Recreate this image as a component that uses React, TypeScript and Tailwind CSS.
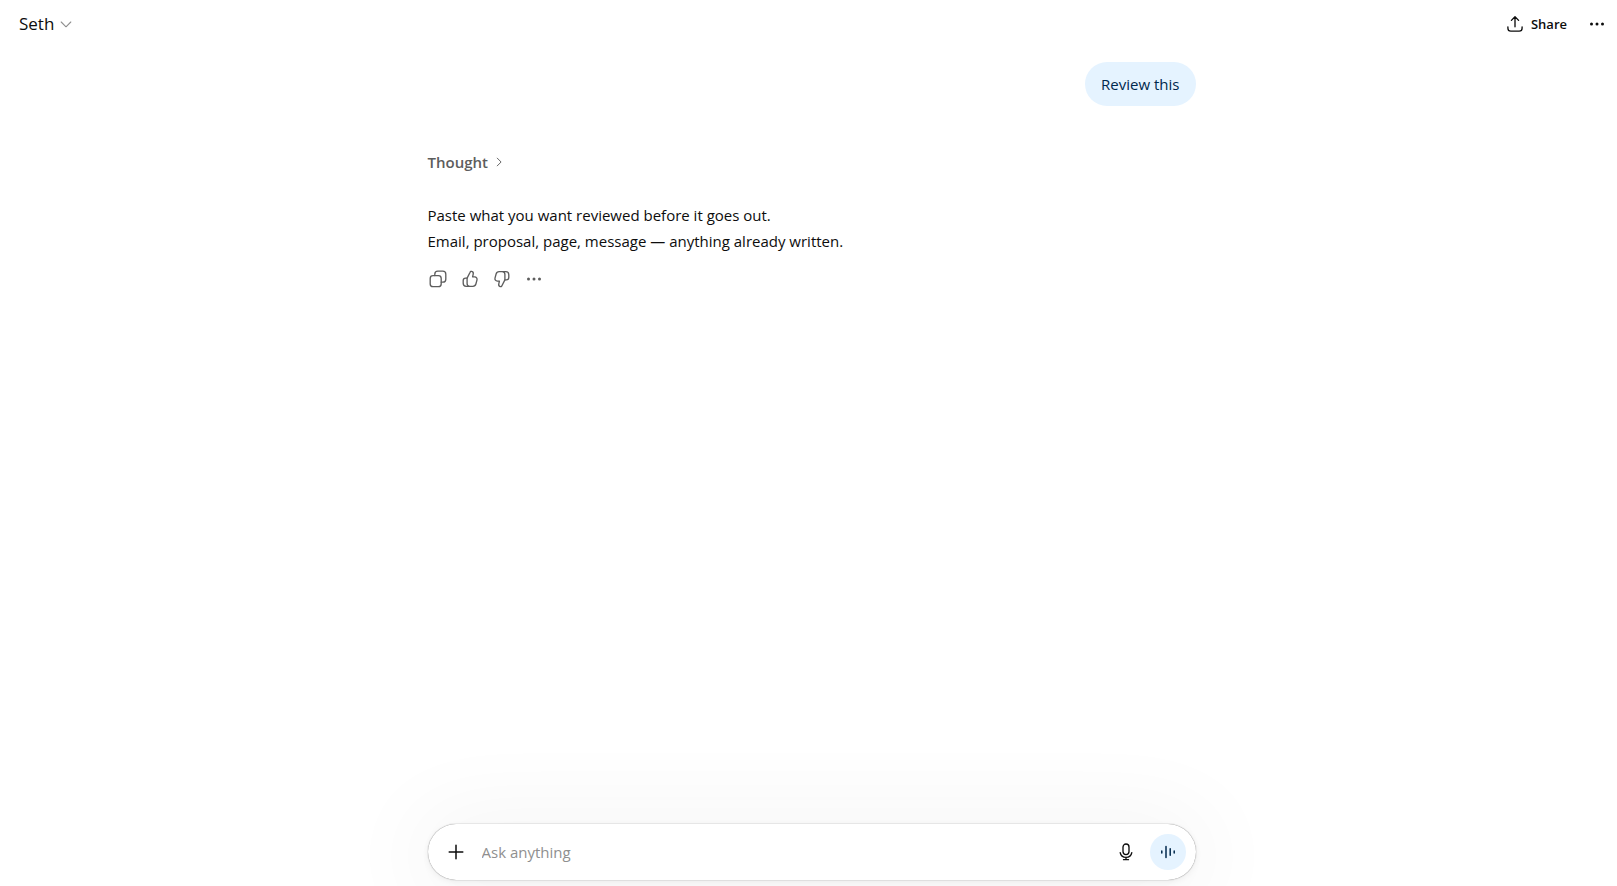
import type { ReactNode } from "react";

function Icon({ size = 20, width = 1.33, children }: { size?: number; width?: number; children: ReactNode }) {
  return (
    <svg
      width={size}
      height={size}
      viewBox="0 0 20 20"
      fill="none"
      stroke="currentColor"
      strokeWidth={width}
      strokeLinecap="round"
      strokeLinejoin="round"
      aria-hidden="true"
      className="shrink-0"
    >
      {children}
    </svg>
  );
}

function Dots() {
  return (
    <svg width="20" height="20" viewBox="0 0 20 20" fill="currentColor" aria-hidden="true">
      <circle cx="4.5" cy="10" r="1.5" />
      <circle cx="10" cy="10" r="1.5" />
      <circle cx="15.5" cy="10" r="1.5" />
    </svg>
  );
}

const thumb = (
  <>
    <path d="M7.1 9.1 10.1 3.2C10.4 2.5 11.1 2.1 11.8 2.4C13 2.8 13.5 4 13.2 5.2L12.6 7.9H14.7C16.3 7.9 17.4 9.3 17 10.9L15.9 15C15.5 16.4 14.3 17.3 12.9 17.3H6.2C4.5 17.3 3.2 16 3.2 14.3V11.5C3.2 10.1 4.2 9.1 5.6 9.1H7.1Z" />
    <path d="M7.1 9.1V14.6C7.1 16.1 7.9 17.1 9.2 17.3" />
  </>
);

const ACTIONS = [
  {
    label: "Copy",
    icon: (
      <Icon>
        <rect x="2.2" y="6.7" width="11" height="11" rx="2.8" />
        <path d="M6.8 6.6V5.2C6.8 3.5 8.1 2.2 9.8 2.2H14.8C16.5 2.2 17.8 3.5 17.8 5.2V10.2C17.8 11.9 16.5 13.2 14.8 13.2H13.3" />
      </Icon>
    ),
  },
  { label: "Good response", icon: <Icon>{thumb}</Icon> },
  {
    label: "Bad response",
    icon: (
      <Icon>
        <g transform="rotate(180 10 10)">{thumb}</g>
      </Icon>
    ),
  },
  { label: "More actions", icon: <Dots /> },
];

function Header() {
  return (
    <header className="flex h-12 items-center justify-between pl-[19px] pr-0.5">
      <button type="button" className="flex items-center gap-1 text-[17px] leading-7">
        Seth
        <span className="text-[#8f8f8f]">
          <Icon size={16}>
            <path d="M4 7.5 10 13.5 16 7.5" />
          </Icon>
        </span>
      </button>
      <div className="flex items-center gap-3">
        <button type="button" className="flex items-center gap-1.5 text-[13px] font-semibold leading-5">
          <Icon>
            <path d="M2.9 12.8V14.2C2.9 15.9 4.1 17.1 5.8 17.1H14.2C15.9 17.1 17.1 15.9 17.1 14.2V12.8" />
            <path d="M10 12.8V3M6.4 6.4 10 2.8 13.6 6.4" />
          </Icon>
          Share
        </button>
        <button type="button" aria-label="More options" className="flex h-9 w-9 items-center justify-center">
          <Dots />
        </button>
      </div>
    </header>
  );
}

function Composer() {
  return (
    <form
      onSubmit={(e) => e.preventDefault()}
      className="flex h-14 items-center rounded-full bg-white px-2.5 shadow-[0_4px_90px_16px_rgba(0,0,0,0.045),0_2px_6px_0_rgba(0,0,0,0.06),0_0_1px_0_rgba(0,0,0,0.62)]"
    >
      <button type="button" aria-label="Add files" className="flex h-9 w-9 items-center justify-center">
        <Icon width={1.5}>
          <path d="M10 3.2V16.8M3.2 10H16.8" />
        </Icon>
      </button>
      <input
        type="text"
        aria-label="Ask anything"
        placeholder="Ask anything"
        className="ml-2 min-w-0 flex-1 bg-transparent text-[15px] leading-6 outline-none placeholder:text-[#8f8f8f]"
      />
      <button type="button" aria-label="Dictate" className="mr-1.5 flex h-9 w-9 items-center justify-center">
        <Icon>
          <rect x="7" y="2" width="6" height="10.6" rx="3" />
          <path d="M4.2 10.6C4.7 13.4 7 15.3 10 15.3S15.3 13.4 15.8 10.6M10 15.3V17.7M7.5 17.7H12.5" />
        </Icon>
      </button>
      <button
        type="button"
        aria-label="Use voice"
        className="flex h-9 w-9 items-center justify-center rounded-full bg-[#e5f3ff] text-[#00284d]"
      >
        <Icon width={1.5}>
          <path d="M3.8 9V11M8 4.6V15.4M12.2 6.8V13.2M16.2 9V11" />
        </Icon>
      </button>
    </form>
  );
}

export default function App() {
  return (
    <div className="flex min-h-screen flex-col overflow-hidden bg-white font-['Open_Sans','Noto_Sans',sans-serif] text-[#0d0d0d]">
      <Header />

      <main className="flex flex-1 flex-col pl-1.5">
        <div className="mx-auto flex w-full max-w-3xl flex-1 flex-col pb-1.5">
          {/* User message */}
          <div className="mt-3.5 flex justify-end">
            <p className="rounded-full bg-[#e5f3ff] px-4 py-2.5 text-[15px] leading-6 text-[#00284d]">Review this</p>
          </div>

          {/* Assistant reply */}
          <button
            type="button"
            className="mt-11 flex items-center gap-1 self-start text-[15px] font-semibold leading-6 text-[#5d5d5d]"
          >
            Thought
            <Icon size={14}>
              <path d="M7.5 4.5 13 10 7.5 15.5" />
            </Icon>
          </button>
          <p className="mt-7 text-[15px] leading-[26px]">
            Paste what you want reviewed before it goes out.
            <br />
            Email, proposal, page, message — anything already written.
          </p>
          <div className="-ml-1.5 mt-[9px] flex text-[#5d5d5d]">
            {ACTIONS.map((action) => (
              <button
                key={action.label}
                type="button"
                aria-label={action.label}
                className="flex h-8 w-8 items-center justify-center"
              >
                {action.icon}
              </button>
            ))}
          </div>

          <div className="mt-auto">
            <Composer />
          </div>
        </div>
      </main>
    </div>
  );
}
